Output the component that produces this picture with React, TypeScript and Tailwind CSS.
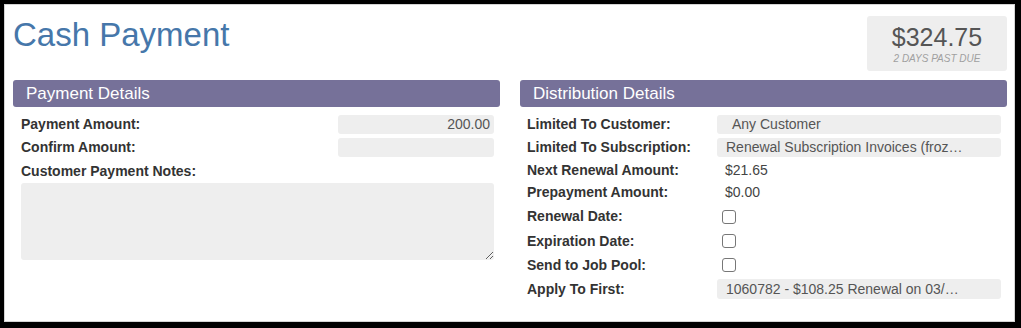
import React from 'react';

const font = { fontFamily: '"Liberation Sans", Arial, sans-serif' };

type Row =
  | { label: string; kind: 'box'; value: string; indent?: boolean; h: string; boxH: string }
  | { label: string; kind: 'text'; value: string; h: string }
  | { label: string; kind: 'check'; h: string };

const distRows: Row[] = [
  { label: 'Limited To Customer:', kind: 'box', value: 'Any Customer', indent: true, h: 'h-[23px]', boxH: 'h-[19px]' },
  { label: 'Limited To Subscription:', kind: 'box', value: 'Renewal Subscription Invoices (froz…', h: 'h-[23px]', boxH: 'h-[19px]' },
  { label: 'Next Renewal Amount:', kind: 'text', value: '$21.65', h: 'h-[22px]' },
  { label: 'Prepayment Amount:', kind: 'text', value: '$0.00', h: 'h-[23px]' },
  { label: 'Renewal Date:', kind: 'check', h: 'h-[25px]' },
  { label: 'Expiration Date:', kind: 'check', h: 'h-[24px]' },
  { label: 'Send to Job Pool:', kind: 'check', h: 'h-[24px]' },
  { label: 'Apply To First:', kind: 'box', value: '1060782 - $108.25 Renewal on 03/…', h: 'h-[24px]', boxH: 'h-[20px]' },
];

function SectionBar({ title }: { title: string }) {
  return (
    <div className="h-[27px] rounded-[3px] bg-[#767199] px-[13px] text-[17px] leading-[27px] text-white">
      {title}
    </div>
  );
}

function DistRow({ row }: { row: Row }) {
  return (
    <div className={`flex items-center ${row.h}`}>
      <div className="w-[190px] shrink-0 text-[14px] font-bold text-[#333]">{row.label}</div>
      <div className="flex-1 mr-[6px]">
        {row.kind === 'box' && (
          <div
            className={`${row.boxH} flex items-center rounded-[3px] bg-[#eeeeee] text-[14px] text-[#555] whitespace-nowrap overflow-hidden ${
              row.indent ? 'pl-[15px]' : 'pl-[9px]'
            }`}
          >
            {row.value}
          </div>
        )}
        {row.kind === 'text' && <div className="pl-[8px] text-[14px] text-[#444]">{row.value}</div>}
        {row.kind === 'check' && (
          <div className="ml-[5px] h-[14px] w-[14px] rounded-[3px] border border-[#777] bg-white" />
        )}
      </div>
    </div>
  );
}

export default function App() {
  return (
    <div className="w-[1021px] h-[328px] bg-black pt-[4px] pl-[4px] pr-[6px] pb-[6px]" style={font}>
      <div className="h-full bg-white border border-[#d4d4d4] pl-[8px] pr-[7px] pt-[11px]">
        <div className="flex items-start justify-between h-[55px]">
          <h1 className="text-[33px] leading-[38px] text-[#4677aa]">Cash Payment</h1>
          <div className="w-[140px] h-[55px] rounded-[3px] bg-[#eeeeee] pt-[7px] text-center">
            <div className="text-[25px] leading-[28px] text-[#555]">$324.75</div>
            <div className="mt-[2px] text-[10px] leading-[12px] italic text-[#a0a0a0]">2 DAYS PAST DUE</div>
          </div>
        </div>

        <div className="mt-[9px] grid grid-cols-2 gap-[20px]">
          <div>
            <SectionBar title="Payment Details" />
            <div className="pt-[6px]">
              <div className="flex items-center h-[23px] pl-[8px]">
                <div className="flex-1 text-[14px] font-bold text-[#333]">Payment Amount:</div>
                <div className="w-[156px] h-[19px] mr-[6px] rounded-[3px] bg-[#eeeeee] pr-[4px] text-right text-[14px] leading-[19px] text-[#555]">
                  200.00
                </div>
              </div>
              <div className="flex items-center h-[23px] pl-[8px]">
                <div className="flex-1 text-[14px] font-bold text-[#333]">Confirm Amount:</div>
                <div className="w-[156px] h-[19px] mr-[6px] rounded-[3px] bg-[#eeeeee]" />
              </div>
              <div className="flex items-center h-[24px] pl-[8px] text-[14px] font-bold text-[#333]">
                Customer Payment Notes:
              </div>
              <div className="pl-[8px] pr-[6px]">
                <textarea
                  readOnly
                  className="block w-full h-[77px] rounded-[3px] bg-[#eeeeee] outline-none border-0"
                />
              </div>
            </div>
          </div>

          <div>
            <SectionBar title="Distribution Details" />
            <div className="pt-[6px] pl-[7px]">
              {distRows.map((r) => (
                <DistRow key={r.label} row={r} />
              ))}
            </div>
          </div>
        </div>
      </div>
    </div>
  );
}
